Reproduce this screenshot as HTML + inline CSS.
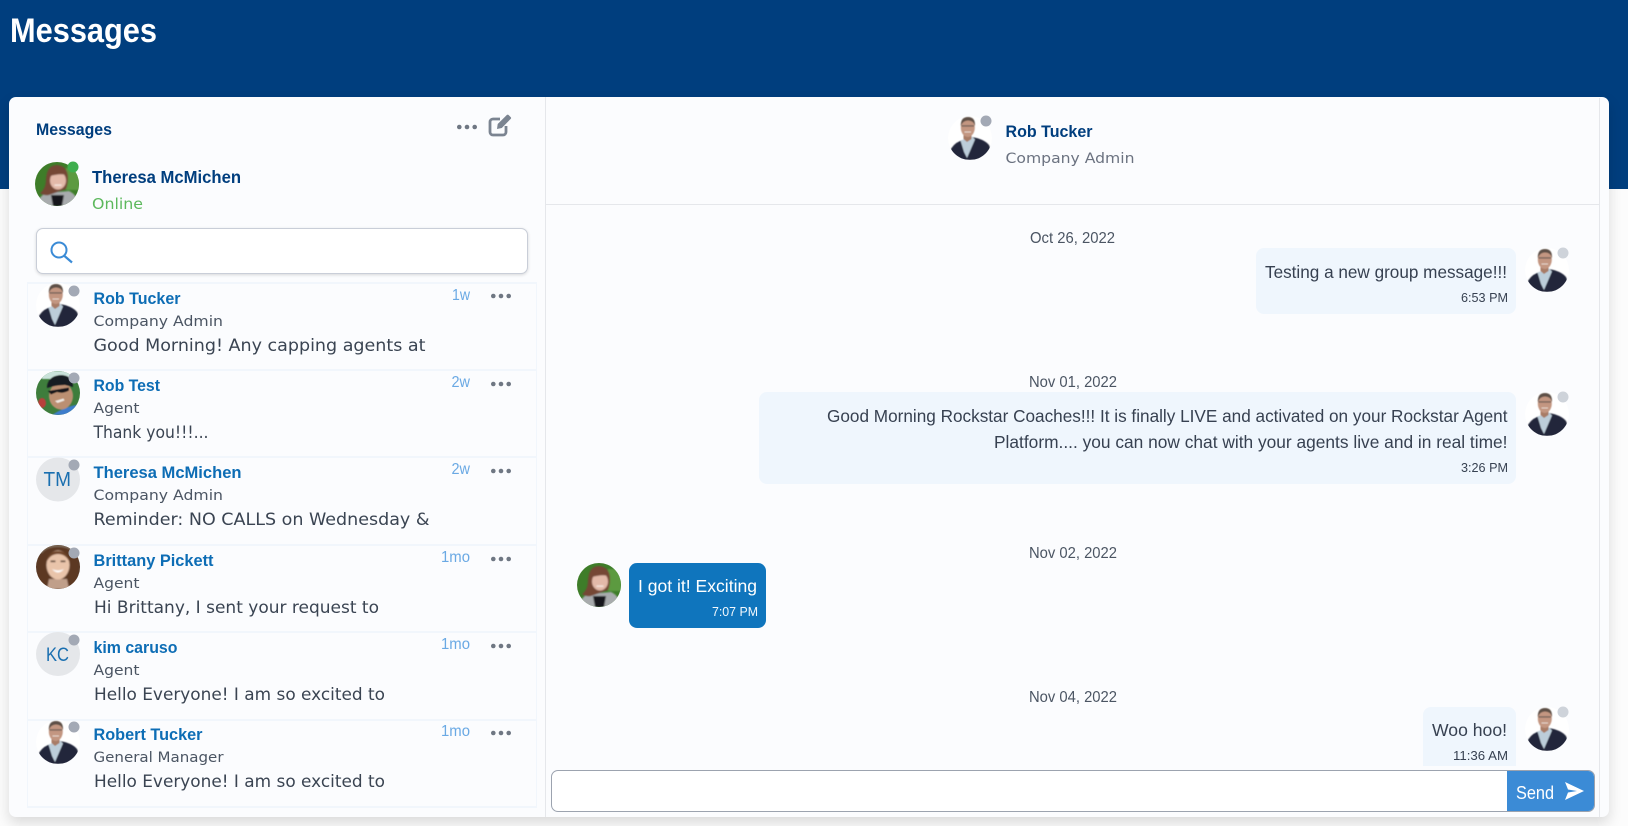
<!DOCTYPE html>
<html lang="en"><head><meta charset="utf-8"><title>Messages</title>
<style>
html,body{margin:0;padding:0;width:1628px;height:826px;overflow:hidden;background:#fcfcfc}
div{position:absolute;box-sizing:border-box}
svg{position:absolute;left:0;top:0}
.s{font-family:"Liberation Sans",sans-serif}
.m{font-family:"DejaVu Sans",sans-serif}
.n{font-family:"Liberation Sans",sans-serif;font-weight:700;font-size:17px;fill:#0d6db5}
.r{font-family:"DejaVu Sans",sans-serif;font-size:14.5px;fill:#4b5563}
.p{font-family:"DejaVu Sans",sans-serif;font-size:17px;fill:#3a4452}
.t{font-family:"Liberation Sans",sans-serif;font-size:15.5px;fill:#6aa9e4}
.d{font-family:"Liberation Sans",sans-serif;font-size:15.5px;fill:#4b5563}
.b{font-family:"Liberation Sans",sans-serif;font-size:17.5px;fill:#374151}
.h{font-family:"Liberation Sans",sans-serif;font-size:13px;fill:#374151}
</style></head><body>
<div style="left:0;top:0;width:1628px;height:189px;background:#003e7e"></div>
<div style="left:9px;top:97px;width:1600px;height:720px;background:#fbfcfe;border-radius:7px;box-shadow:0 6px 14px rgba(0,0,0,.14)"></div>
<div style="left:545px;top:97px;width:1px;height:720px;background:#e5e7eb"></div>
<div style="left:1599px;top:98px;width:1px;height:719px;background:#e5e7eb"></div>
<div style="left:546px;top:204px;width:1053px;height:1px;background:#e5e7eb"></div>
<div style="left:36px;top:228px;width:492px;height:46px;background:#fff;border:1px solid #c9ced8;border-radius:7px;box-shadow:0 1px 3px rgba(0,0,0,.15)"></div>
<div style="left:27px;top:282px;width:510px;height:526px;border-left:1px solid #f1f6fc;border-right:1px solid #f1f6fc"></div>
<div style="left:27px;top:282px;width:510px;height:2px;background:#f1f6fc"></div>
<div style="left:27px;top:369px;width:510px;height:2px;background:#f1f6fc"></div>
<div style="left:27px;top:456px;width:510px;height:2px;background:#f1f6fc"></div>
<div style="left:27px;top:544px;width:510px;height:2px;background:#f1f6fc"></div>
<div style="left:27px;top:631px;width:510px;height:2px;background:#f1f6fc"></div>
<div style="left:27px;top:719px;width:510px;height:2px;background:#f1f6fc"></div>
<div style="left:27px;top:806px;width:510px;height:2px;background:#f1f6fc"></div>
<div style="left:1256px;top:248px;width:260px;height:66px;background:#eff6fd;border-radius:8px"></div>
<div style="left:759px;top:392px;width:757px;height:92px;background:#eff6fd;border-radius:8px"></div>
<div style="left:629px;top:563px;width:137px;height:65px;background:#0f75bd;border-radius:8px"></div>
<div style="left:1423px;top:707px;width:93px;height:59px;background:#eff6fd;border-radius:8px 8px 0 0"></div>
<div style="left:551px;top:770px;width:1044px;height:42px;background:#fff;border:1px solid #9ca3af;border-radius:7px"></div>
<div style="left:1507px;top:771px;width:87px;height:40px;background:#3b8bd6;border-radius:0 6px 6px 0"></div>
<svg width="1628" height="826" viewBox="0 0 1628 826" xmlns="http://www.w3.org/2000/svg">
<defs>
<clipPath id="c"><circle cx="22" cy="22" r="22"/></clipPath>
<filter id="f" x="-10%" y="-10%" width="120%" height="120%"><feGaussianBlur stdDeviation=".6"/></filter>
<filter id="g" x="-10%" y="-10%" width="120%" height="120%"><feGaussianBlur stdDeviation=".9"/></filter>
<g id="rob" clip-path="url(#c)"><circle cx="22" cy="22" r="22" fill="#fff"/><g filter="url(#f)">
<path d="M2 44V35Q5 28 12 25L24 21Q36 23 41 29L44 37V44Z" fill="#23263a"/>
<path d="M12.500 24.500L24 20.500L27 23.500L19 42L16 36Z" fill="#bccdd9"/>
<path d="M15.500 17h8v6l-4.500 3-3.500-3Z" fill="#a87b66"/>
<ellipse cx="19.800" cy="11.500" rx="7" ry="9.500" fill="#c39681"/>
<path d="M12.800 10Q12.500 1 20 1Q27.500 1 27 10Q25.500 4.500 20 4.500Q15 4.500 12.800 10Z" fill="#5d5047"/>
<rect x="13.500" y="9.300" width="12.500" height="1.300" fill="#6e5f57"/>
<rect x="16.500" y="15.500" width="6.500" height="1" fill="#e8d9d0"/></g></g>
<g id="the" clip-path="url(#c)"><rect width="44" height="44" fill="#3e7d29"/><g filter="url(#g)">
<rect x="31" y="6" width="13" height="22" fill="#5b9a40"/>
<path d="M2 44Q3 34 12 31L34 29Q43 33 43 44Z" fill="#a8abad"/>
<path d="M16 33H29L27 44H18Z" fill="#17171a"/>
<path d="M5 31Q11 27 11 17Q12 3 22 3Q33 4 33 16Q33 22 31 27L14 33Q9 34 5 31Z" fill="#744636"/>
<ellipse cx="23" cy="18.500" rx="8" ry="9" fill="#e3b9a9"/>
<path d="M15 14Q19 9 24 9Q30 9 31 13Q26 11 15 14Z" fill="#744636"/>
<rect x="19.500" y="22.500" width="7" height="1.300" fill="#f8ebe5"/></g></g>
<g id="test" clip-path="url(#c)"><rect width="44" height="44" fill="#3e7d3c"/><g filter="url(#f)">
<rect x="6" y="0" width="34" height="8" fill="#c9e2da"/>
<ellipse cx="6" cy="32" rx="4" ry="5" fill="#b8413a"/>
<path d="M16 44Q28 36 44 33V44Z" fill="#3e7ccb"/>
<ellipse cx="25" cy="25" rx="12" ry="13.500" fill="#bb8f72"/>
<path d="M11 15Q13 4 26 4Q37 5 37 16L29 14Q20 14 11 17Z" fill="#191e24"/>
<path d="M12 20L33 16.500V19.500Q27 23 21 21L15 23.500Z" fill="#17191d"/>
<path d="M19 30L27.500 27.500L28.500 29.500L21.500 32Z" fill="#efe9e2"/></g></g>
<g id="bri" clip-path="url(#c)"><rect width="44" height="44" fill="#5a3a26"/><g filter="url(#g)">
<rect x="0" y="0" width="44" height="8" fill="#7c6956"/>
<path d="M2 38L2 20Q3 2 22 2Q41 2 42 20L42 38L32 42H12Z" fill="#5c3822"/>
<path d="M13 34H31L33 44H11Z" fill="#c09f8a"/>
<ellipse cx="22" cy="20" rx="11.500" ry="14.500" fill="#e9c4aa"/>
<path d="M10 18Q12 6 22 6Q32 6 34 18Q30 9 22 9Q14 9 10 18Z" fill="#6d4328"/>
<path d="M16 24Q22 27 28 24Q22 31 16 24Z" fill="#fff"/>
<rect x="14.500" y="15.500" width="5" height="1.600" fill="#4a3022"/><rect x="24.500" y="15.500" width="5" height="1.600" fill="#4a3022"/></g></g>
<g id="dots"><circle cx="2.300" cy="0" r="2.300"/><circle cx="10" cy="0" r="2.300"/><circle cx="17.700" cy="0" r="2.300"/></g>
</defs>

<text x="10" y="42" textLength="147" lengthAdjust="spacingAndGlyphs" class="s" font-size="34" font-weight="700" fill="#fff">Messages</text>
<text x="36" y="135" textLength="76" lengthAdjust="spacingAndGlyphs" class="s" font-size="17" font-weight="700" fill="#003e7e">Messages</text>
<use href="#dots" x="457" y="127" fill="#6f7783"/>
<path d="M500 119H493a3 3 0 0 0-3 3V132a3 3 0 0 0 3 3H503a3 3 0 0 0 3-3V126" fill="none" stroke="#7b8491" stroke-width="2.800"/>
<path d="M497 129L497.700 124L506.800 115a1.300 1.300 0 0 1 1.800 0L510.700 117.100a1.300 1.300 0 0 1 0 1.800L501.800 128Z" fill="#7b8491"/>
<use href="#the" x="35" y="162"/>
<circle cx="73" cy="167" r="5.500" fill="#3fae4e"/>
<text x="92" y="183" textLength="149" lengthAdjust="spacingAndGlyphs" class="s" font-size="17.500" font-weight="700" fill="#003e7e">Theresa McMichen</text>
<text x="92" y="209" textLength="51" lengthAdjust="spacingAndGlyphs" class="m" font-size="15" fill="#5cb85c">Online</text>
<circle cx="59" cy="250" r="7.500" fill="none" stroke="#3b8bd6" stroke-width="2"/>
<path d="M64.500 256L72 262.500" stroke="#3b8bd6" stroke-width="2.200" fill="none"/>

<!-- rows -->
<g>
<use href="#rob" x="36" y="283"/><circle cx="74" cy="291" r="5.500" fill="#a3a9b5"/>
<text x="93.500" y="304" textLength="87" lengthAdjust="spacingAndGlyphs" class="n">Rob Tucker</text>
<text x="93.500" y="326" textLength="129.500" lengthAdjust="spacingAndGlyphs" class="r">Company Admin</text>
<text x="93.500" y="351" textLength="332" lengthAdjust="spacingAndGlyphs" class="p">Good Morning! Any capping agents at</text>
<text x="452" y="300" textLength="18" lengthAdjust="spacingAndGlyphs" class="t">1w</text>
<use href="#dots" x="491" y="296" fill="#6f7783"/>
</g>
<g transform="translate(0,87)">
<use href="#test" x="36" y="284"/><circle cx="74" cy="291" r="5.500" fill="#a3a9b5"/>
<text x="93.500" y="304" textLength="66.500" lengthAdjust="spacingAndGlyphs" class="n">Rob Test</text>
<text x="93.500" y="326" textLength="46" lengthAdjust="spacingAndGlyphs" class="r">Agent</text>
<text x="93.500" y="351" textLength="115" lengthAdjust="spacingAndGlyphs" class="p">Thank you!!!...</text>
<text x="451.500" y="300" textLength="18.500" lengthAdjust="spacingAndGlyphs" class="t">2w</text>
<use href="#dots" x="491" y="297" fill="#6f7783"/>
</g>
<g transform="translate(0,174)">
<circle cx="58" cy="305.500" r="22" fill="#e5e7ea"/><circle cx="74" cy="291" r="5.500" fill="#a3a9b5"/>
<text x="43.500" y="312" textLength="27.500" lengthAdjust="spacingAndGlyphs" class="s" font-size="20" fill="#1a6fb0">TM</text>
<text x="93.500" y="304" textLength="148" lengthAdjust="spacingAndGlyphs" class="n">Theresa McMichen</text>
<text x="93.500" y="326" textLength="129.500" lengthAdjust="spacingAndGlyphs" class="r">Company Admin</text>
<text x="93.500" y="351" textLength="336" lengthAdjust="spacingAndGlyphs" class="p">Reminder: NO CALLS on Wednesday &amp;</text>
<text x="451.500" y="300" textLength="18.500" lengthAdjust="spacingAndGlyphs" class="t">2w</text>
<use href="#dots" x="491" y="297" fill="#6f7783"/>
</g>
<g transform="translate(0,262)">
<use href="#bri" x="36" y="283"/><circle cx="74" cy="291" r="5.500" fill="#a3a9b5"/>
<text x="93.500" y="304" textLength="120" lengthAdjust="spacingAndGlyphs" class="n">Brittany Pickett</text>
<text x="93.500" y="326" textLength="46" lengthAdjust="spacingAndGlyphs" class="r">Agent</text>
<text x="94" y="351" textLength="285" lengthAdjust="spacingAndGlyphs" class="p">Hi Brittany, I sent your request to</text>
<text x="441" y="300" textLength="29" lengthAdjust="spacingAndGlyphs" class="t">1mo</text>
<use href="#dots" x="491" y="297" fill="#6f7783"/>
</g>
<g transform="translate(0,349)">
<circle cx="58" cy="305" r="22" fill="#e5e7ea"/><circle cx="74" cy="291" r="5.500" fill="#a3a9b5"/>
<text x="46" y="312" textLength="23" lengthAdjust="spacingAndGlyphs" class="s" font-size="19" fill="#1a6fb0">KC</text>
<text x="93.500" y="304" textLength="84" lengthAdjust="spacingAndGlyphs" class="n">kim caruso</text>
<text x="93.500" y="326" textLength="46" lengthAdjust="spacingAndGlyphs" class="r">Agent</text>
<text x="94" y="351" textLength="291" lengthAdjust="spacingAndGlyphs" class="p">Hello Everyone! I am so excited to</text>
<text x="441" y="300" textLength="29" lengthAdjust="spacingAndGlyphs" class="t">1mo</text>
<use href="#dots" x="491" y="297" fill="#6f7783"/>
</g>
<g transform="translate(0,436)">
<use href="#rob" x="36" y="284"/><circle cx="74" cy="291" r="5.500" fill="#a3a9b5"/>
<text x="93.500" y="304" textLength="109" lengthAdjust="spacingAndGlyphs" class="n">Robert Tucker</text>
<text x="93.500" y="326" textLength="130" lengthAdjust="spacingAndGlyphs" class="r">General Manager</text>
<text x="94" y="351" textLength="291" lengthAdjust="spacingAndGlyphs" class="p">Hello Everyone! I am so excited to</text>
<text x="441" y="300" textLength="29" lengthAdjust="spacingAndGlyphs" class="t">1mo</text>
<use href="#dots" x="491" y="297" fill="#6f7783"/>
</g>

<!-- conversation header -->
<use href="#rob" x="948" y="116"/><circle cx="986" cy="121" r="5.500" fill="#a3a9b5"/>
<text x="1005.500" y="137" textLength="87" lengthAdjust="spacingAndGlyphs" class="s" font-size="17" font-weight="700" fill="#003e7e">Rob Tucker</text>
<text x="1005.500" y="163" textLength="129" lengthAdjust="spacingAndGlyphs" class="m" font-size="14.500" fill="#6b7280">Company Admin</text>

<!-- messages -->
<text x="1030" y="243" textLength="85" lengthAdjust="spacingAndGlyphs" class="d">Oct 26, 2022</text>
<text x="1265" y="278" textLength="242" lengthAdjust="spacingAndGlyphs" class="b">Testing a new group message!!!</text>
<text x="1461" y="302" textLength="47" lengthAdjust="spacingAndGlyphs" class="h">6:53 PM</text>
<use href="#rob" x="1525" y="248"/><circle cx="1563" cy="253" r="5.500" fill="#ced3da"/>

<text x="1029" y="387" textLength="88" lengthAdjust="spacingAndGlyphs" class="d">Nov 01, 2022</text>
<text x="827" y="422" textLength="680.500" lengthAdjust="spacingAndGlyphs" class="b">Good Morning Rockstar Coaches!!! It is finally LIVE and activated on your Rockstar Agent</text>
<text x="994" y="448" textLength="513.500" lengthAdjust="spacingAndGlyphs" class="b">Platform.... you can now chat with your agents live and in real time!</text>
<text x="1461" y="472" textLength="47" lengthAdjust="spacingAndGlyphs" class="h">3:26 PM</text>
<use href="#rob" x="1525" y="392"/><circle cx="1563" cy="397" r="5.500" fill="#ced3da"/>

<text x="1029" y="558" textLength="88" lengthAdjust="spacingAndGlyphs" class="d">Nov 02, 2022</text>
<use href="#the" x="577" y="563"/>
<text x="638" y="592" textLength="119" lengthAdjust="spacingAndGlyphs" class="b" style="fill:#fff">I got it! Exciting</text>
<text x="712" y="616" textLength="46" lengthAdjust="spacingAndGlyphs" class="h" style="fill:#f2f8fd">7:07 PM</text>

<text x="1029" y="702" textLength="88" lengthAdjust="spacingAndGlyphs" class="d">Nov 04, 2022</text>
<text x="1432" y="736" textLength="75" lengthAdjust="spacingAndGlyphs" class="b">Woo hoo!</text>
<text x="1453" y="760" textLength="55" lengthAdjust="spacingAndGlyphs" class="h">11:36 AM</text>
<use href="#rob" x="1525" y="707"/><circle cx="1563" cy="712" r="5.500" fill="#ced3da"/>

<text x="1516" y="799" textLength="38" lengthAdjust="spacingAndGlyphs" class="s" font-size="18" fill="#fff">Send</text>
<path d="M1565 782L1584 791L1565 800L1568 792.500L1577 791L1568 789.500Z" fill="#fff"/>
</svg>
</body></html>
